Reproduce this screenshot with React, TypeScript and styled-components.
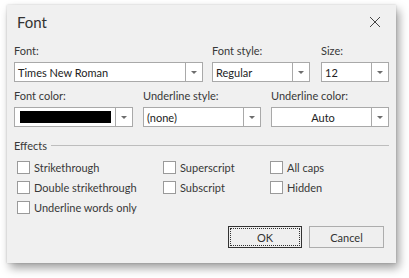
import React from 'react';
import styled, { createGlobalStyle } from 'styled-components';

const GlobalStyle = createGlobalStyle`
  html, body {
    margin: 0;
    padding: 0;
    background: #ffffff;
  }
  body {
    font-family: 'Lato', 'Liberation Sans', sans-serif;
    font-size: 11px;
    color: #383838;
  }
`;

const Page = styled.div`
  width: 409px;
  height: 278px;
  padding: 5px 0 0 7px;
  box-sizing: border-box;
`;

const Dialog = styled.div`
  width: 389px;
  height: 258px;
  box-sizing: border-box;
  background: #f0f0f0;
  box-shadow: 3px 5px 9px rgba(0, 0, 0, 0.38), 0 0 2px rgba(0, 0, 0, 0.18);
  display: flex;
  flex-direction: column;
`;

const TitleBar = styled.div`
  height: 39px;
  display: flex;
  align-items: center;
  justify-content: space-between;
  padding: 0 15px 0 10px;
`;

const Title = styled.span`
  font-size: 15px;
  color: #333333;
  margin-top: -6px;
`;

const CloseButton = styled.button`
  width: 12px;
  height: 12px;
  padding: 0;
  border: 0;
  background: transparent;
  display: flex;
  margin-top: -6px;
`;

const Body = styled.div`
  padding: 0 7px;
  display: flex;
  flex-direction: column;
`;

const FieldRow = styled.div<{ $cols: string }>`
  display: grid;
  grid-template-columns: ${(p) => p.$cols};
  margin-bottom: 7px;
`;

const Field = styled.div`
  display: flex;
  flex-direction: column;
`;

const Label = styled.label`
  height: 18px;
  line-height: 14px;
`;

const Combo = styled.div`
  height: 20px;
  box-sizing: border-box;
  border: 1px solid #a9a9a9;
  background: #ffffff;
  display: flex;
`;

const ComboText = styled.div<{ $center?: boolean }>`
  flex: 1;
  display: flex;
  align-items: center;
  justify-content: ${(p) => (p.$center ? 'center' : 'flex-start')};
  padding-left: 3px;
  overflow: hidden;
  white-space: nowrap;
  color: #222222;
`;

const Swatch = styled.div`
  flex: 1;
  margin: 3px 4px 3px 5px;
  background: #000000;
`;

const ComboButton = styled.div`
  width: 16px;
  border-left: 1px solid #a9a9a9;
  display: flex;
  align-items: center;
  justify-content: center;
`;

const Arrow = styled.div`
  width: 0;
  height: 0;
  border-left: 3px solid transparent;
  border-right: 3px solid transparent;
  border-top: 3px solid #6d6d6d;
`;

const GroupHeader = styled.div`
  display: flex;
  align-items: center;
  gap: 4px;
  margin-top: 3px;
  height: 16px;
`;

const GroupLine = styled.div`
  flex: 1;
  height: 1px;
  background: #bdbdbd;
`;

const Checks = styled.div`
  display: grid;
  grid-template-columns: 146px 107px 1fr;
  grid-auto-rows: 20px;
  padding: 4px 0 0 3px;
`;

const CheckItem = styled.label`
  display: flex;
  align-items: center;
  gap: 4px;
`;

const Box = styled.span`
  width: 13px;
  height: 13px;
  box-sizing: border-box;
  border: 1px solid #9a9a9a;
  background: #ffffff;
`;

const Footer = styled.div`
  display: flex;
  justify-content: flex-end;
  gap: 7px;
  padding: 0 12px 0 0;
  margin-top: 9px;
`;

const Button = styled.button<{ $default?: boolean }>`
  width: ${(p) => (p.$default ? '74px' : '75px')};
  height: 22px;
  box-sizing: border-box;
  border: 1px solid ${(p) => (p.$default ? '#333333' : '#adadad')};
  background: #efefef;
  font: inherit;
  color: #333333;
  padding: 0;
  outline: ${(p) => (p.$default ? '1px dotted #333333' : 'none')};
  outline-offset: -3px;
`;

const ArrowButton = () => (
  <ComboButton>
    <Arrow />
  </ComboButton>
);

const ComboBox = ({ value, center }: { value: string; center?: boolean }) => (
  <Combo>
    <ComboText $center={center}>{value}</ComboText>
    <ArrowButton />
  </Combo>
);

const effects = [
  'Strikethrough',
  'Superscript',
  'All caps',
  'Double strikethrough',
  'Subscript',
  'Hidden',
  'Underline words only',
];

export default function App() {
  return (
    <>
      <GlobalStyle />
      <Page>
        <Dialog>
          <TitleBar>
            <Title>Font</Title>
            <CloseButton>
              <svg width="12" height="12" viewBox="0 0 12 12">
                <path d="M1 1 L11 11 M11 1 L1 11" stroke="#444" strokeWidth="1" fill="none" />
              </svg>
            </CloseButton>
          </TitleBar>
          <Body>
            <FieldRow $cols="189px 9px 98px 11px 1fr">
              <Field>
                <Label>Font:</Label>
                <ComboBox value="Times New Roman" />
              </Field>
              <span />
              <Field>
                <Label>Font style:</Label>
                <ComboBox value="Regular" />
              </Field>
              <span />
              <Field>
                <Label>Size:</Label>
                <ComboBox value="12" />
              </Field>
            </FieldRow>
            <FieldRow $cols="119px 10px 118px 10px 1fr">
              <Field>
                <Label>Font color:</Label>
                <Combo>
                  <Swatch />
                  <ArrowButton />
                </Combo>
              </Field>
              <span />
              <Field>
                <Label>Underline style:</Label>
                <ComboBox value="(none)" />
              </Field>
              <span />
              <Field>
                <Label>Underline color:</Label>
                <ComboBox value="Auto" center />
              </Field>
            </FieldRow>
            <GroupHeader>
              <span>Effects</span>
              <GroupLine />
            </GroupHeader>
            <Checks>
              {effects.map((e) => (
                <CheckItem key={e}>
                  <Box />
                  {e}
                </CheckItem>
              ))}
            </Checks>
          </Body>
          <Footer>
            <Button $default>OK</Button>
            <Button>Cancel</Button>
          </Footer>
        </Dialog>
      </Page>
    </>
  );
}
